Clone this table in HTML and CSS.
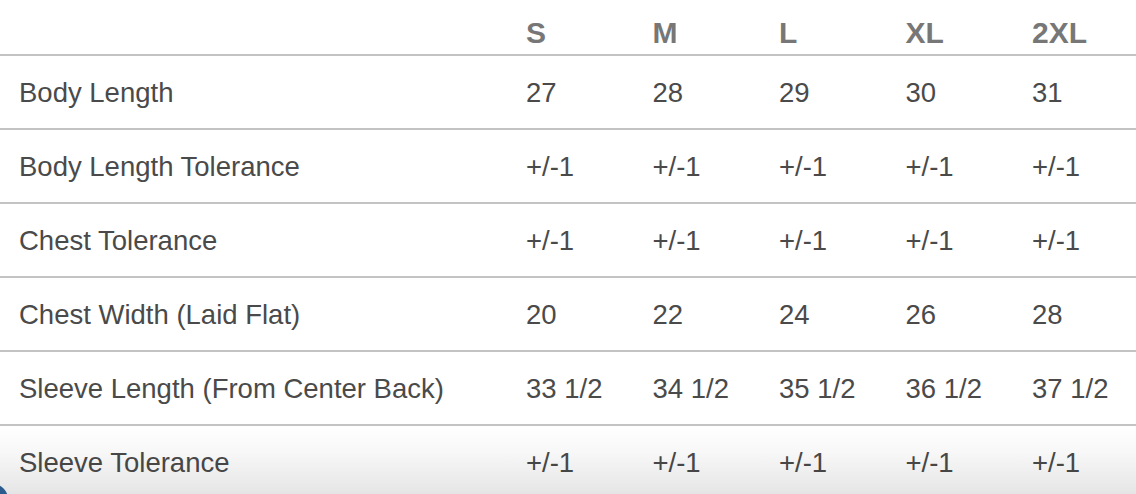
FILE: index.html
```html
<!DOCTYPE html>
<html lang="en">
<head>
<meta charset="utf-8">
<title>Size Chart</title>
<link rel="stylesheet" href="styles.css">
</head>
<body>
<div class="chart">
  <div class="row head">
    <div class="cell label"></div>
    <div class="cell">S</div>
    <div class="cell">M</div>
    <div class="cell">L</div>
    <div class="cell">XL</div>
    <div class="cell">2XL</div>
  </div>
  <div class="row">
    <div class="cell label">Body Length</div>
    <div class="cell">27</div>
    <div class="cell">28</div>
    <div class="cell">29</div>
    <div class="cell">30</div>
    <div class="cell">31</div>
  </div>
  <div class="row">
    <div class="cell label">Body Length Tolerance</div>
    <div class="cell">+/-1</div>
    <div class="cell">+/-1</div>
    <div class="cell">+/-1</div>
    <div class="cell">+/-1</div>
    <div class="cell">+/-1</div>
  </div>
  <div class="row">
    <div class="cell label">Chest Tolerance</div>
    <div class="cell">+/-1</div>
    <div class="cell">+/-1</div>
    <div class="cell">+/-1</div>
    <div class="cell">+/-1</div>
    <div class="cell">+/-1</div>
  </div>
  <div class="row">
    <div class="cell label">Chest Width (Laid Flat)</div>
    <div class="cell">20</div>
    <div class="cell">22</div>
    <div class="cell">24</div>
    <div class="cell">26</div>
    <div class="cell">28</div>
  </div>
  <div class="row">
    <div class="cell label">Sleeve Length (From Center Back)</div>
    <div class="cell">33 1/2</div>
    <div class="cell">34 1/2</div>
    <div class="cell">35 1/2</div>
    <div class="cell">36 1/2</div>
    <div class="cell">37 1/2</div>
  </div>
  <div class="row">
    <div class="cell label">Sleeve Tolerance</div>
    <div class="cell">+/-1</div>
    <div class="cell">+/-1</div>
    <div class="cell">+/-1</div>
    <div class="cell">+/-1</div>
    <div class="cell">+/-1</div>
  </div>
</div>
<div class="bottom-shade"></div>
<div class="corner-dot"></div>
</body>
</html>
```

FILE: styles.css
```css
html, body {
  margin: 0;
  padding: 0;
  background: #ffffff;
  overflow: hidden;
  height: 494px;
}

body {
  font-family: "Liberation Sans", Arial, Helvetica, sans-serif;
  color: #4a4a4a;
  position: relative;
  width: 1136px;
}

.chart {
  width: 1136px;
  overflow: hidden;
}

.row {
  display: grid;
  grid-template-columns: 526px repeat(5, 126.5px);
  height: 70px;
  align-items: center;
  border-bottom: 2px solid #c3c3c3;
  font-size: 27.5px;
  line-height: 27.5px;
  padding-top: 2px;
  box-sizing: content-box;
  width: 1160px;
}

.row.head {
  height: 36px;
  padding-top: 18px;
  align-items: start;
  font-weight: bold;
  font-size: 30px;
  line-height: 30px;
  color: #777777;
}

.cell {
  white-space: nowrap;
}

.cell.label {
  padding-left: 19px;
}

.bottom-shade {
  position: absolute;
  left: 0;
  right: 0;
  top: 426px;
  height: 68px;
  background: linear-gradient(to bottom, rgba(0, 0, 0, 0) 0%, rgba(0, 0, 0, 0.03) 40%, rgba(0, 0, 0, 0.1) 100%);
  pointer-events: none;
}

.corner-dot {
  position: absolute;
  left: -22px;
  top: 484px;
  width: 30px;
  height: 30px;
  border-radius: 50%;
  background: #2c5b8e;
}
```
